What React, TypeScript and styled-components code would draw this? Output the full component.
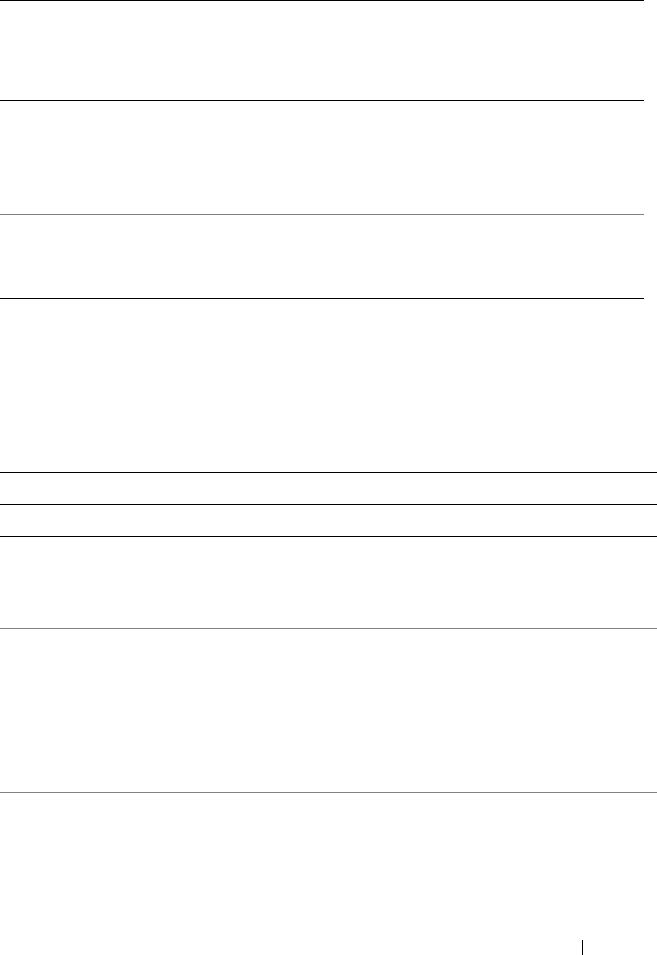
import styled, { createGlobalStyle } from 'styled-components';

const GlobalStyle = createGlobalStyle`
  html, body {
    margin: 0;
    padding: 0;
    background: #ffffff;
    font-family: "Liberation Serif", serif;
  }
`;

const Page = styled.div`
  width: 657px;
  height: 955px;
  display: flex;
  flex-direction: column;
  overflow: hidden;
`;

const Table = styled.div<{ $width: number; $marginTop?: number }>`
  width: ${(p) => p.$width}px;
  margin-top: ${(p) => p.$marginTop ?? 0}px;
  border-top: 1px solid #000000;
  display: flex;
  flex-direction: column;
`;

const Row = styled.div<{ $height: number; $light?: boolean }>`
  height: ${(p) => p.$height}px;
  border-bottom: 1px solid ${(p) => (p.$light ? '#808080' : '#000000')};
`;

const Footer = styled.div`
  margin-top: auto;
  display: flex;
  justify-content: flex-end;
`;

const PageNumber = styled.span`
  width: 74px;
  height: 15px;
  border-left: 1px solid #000000;
`;

export default function App() {
  return (
    <>
      <GlobalStyle />
      <Page>
        <Table $width={644}>
          <Row $height={99} />
          <Row $height={113} $light />
          <Row $height={83} />
        </Table>
        <Table $width={657} $marginTop={173}>
          <Row $height={31} />
          <Row $height={31} />
          <Row $height={91} $light />
          <Row $height={163} $light />
        </Table>
        <Footer>
          <PageNumber />
        </Footer>
      </Page>
    </>
  );
}
